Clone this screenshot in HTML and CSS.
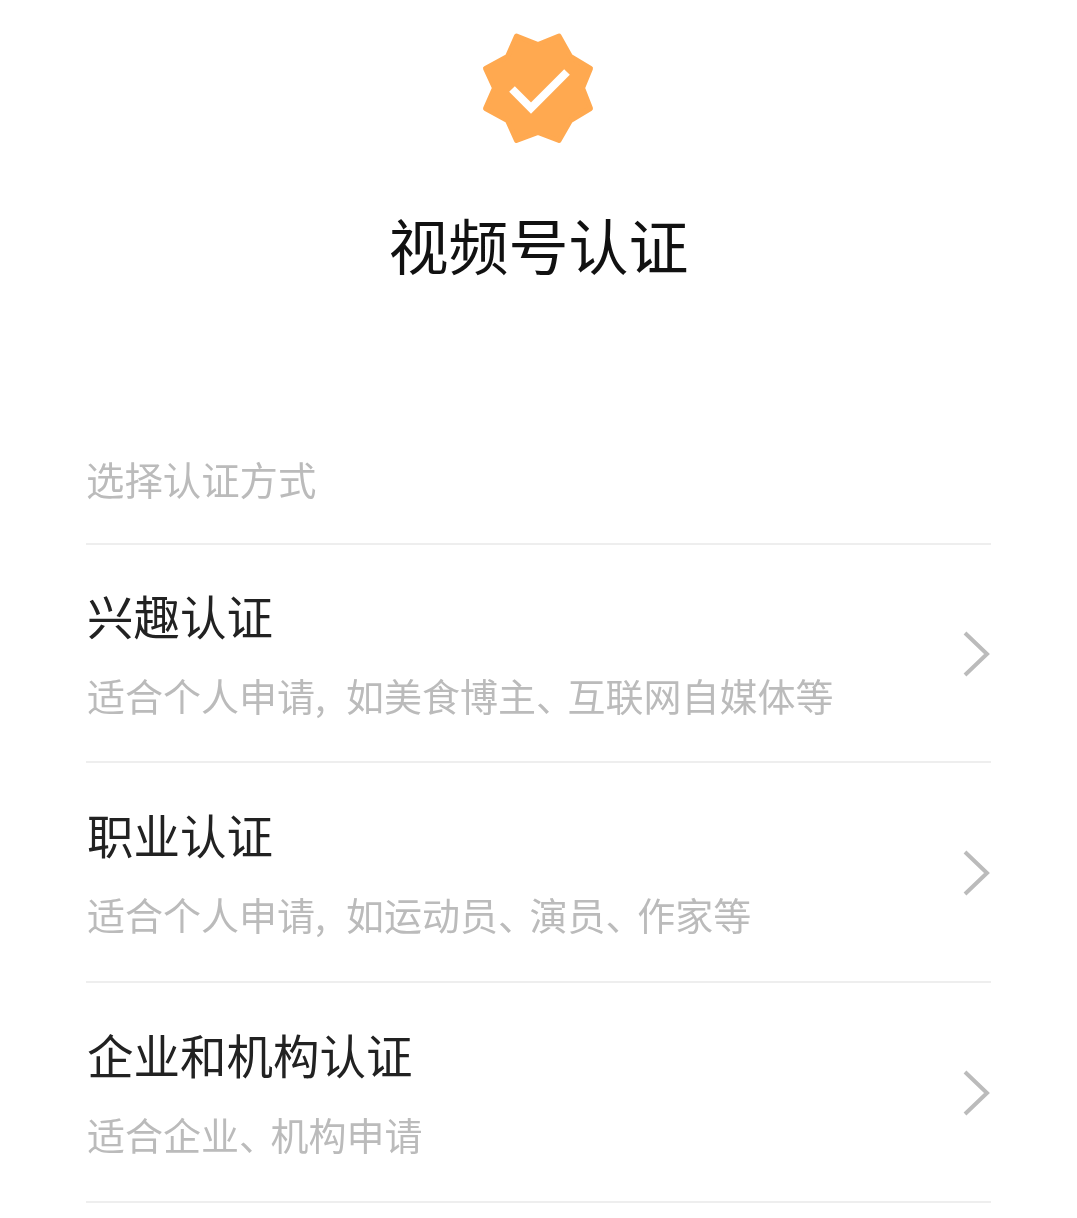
FILE: index.html
```html
<!DOCTYPE html>
<html lang="zh-CN">
<head>
  <meta charset="UTF-8" />
  <title>视频号认证</title>
  <link rel="stylesheet" href="styles.css">
</head>
<body>
  <header class="top">
    <svg class="badge" viewBox="478 28 121 121" width="121" height="121">
      <path class="star" d="M516.5 36 L538 44.5 L559 36 L570.5 56.5 L590.5 68.5 L582.5 88 L590.5 108.5 L570.5 120.5 L559 140.5 L538 132.5 L516.5 140.5 L507.5 120.5 L485.5 108.5 L494.5 88 L485.5 68.5 L507.5 56.5 Z"/>
      <path class="tick" d="M512 89 L531 108 L567 72"/>
    </svg>
    <h1>视频号认证</h1>
  </header>

  <main class="list">
    <p class="list-label">选择认证方式</p>

    <a class="item">
      <div class="item-text">
        <h2>兴趣认证</h2>
        <p>适合个人申请, 如美食博主<span class="dun">、</span>互联网自媒体等</p>
      </div>
      <svg class="arrow" viewBox="0 0 30 50" width="30" height="50"><path d="M5 4 L27 25 L5 46"/></svg>
    </a>

    <a class="item">
      <div class="item-text">
        <h2>职业认证</h2>
        <p>适合个人申请, 如运动员<span class="dun">、</span>演员<span class="dun">、</span>作家等</p>
      </div>
      <svg class="arrow" viewBox="0 0 30 50" width="30" height="50"><path d="M5 4 L27 25 L5 46"/></svg>
    </a>

    <a class="item">
      <div class="item-text">
        <h2>企业和机构认证</h2>
        <p>适合企业<span class="dun">、</span>机构申请</p>
      </div>
      <svg class="arrow" viewBox="0 0 30 50" width="30" height="50"><path d="M5 4 L27 25 L5 46"/></svg>
    </a>
  </main>
</body>
</html>
```

FILE: styles.css
```css
html, body {
  margin: 0;
  padding: 0;
  background-color: #fff;
}

body {
  font-family: "Noto Sans CJK SC", "Noto Sans", sans-serif;
  overflow: hidden;
}

.top {
  display: flex;
  flex-direction: column;
  align-items: center;
  padding-top: 28px;
  will-change: transform;
}

.badge {
  display: block;
}

.star {
  fill: #ffa950;
  stroke: #ffa950;
  stroke-width: 5;
  stroke-linejoin: round;
}

.tick {
  fill: none;
  stroke: #fff;
  stroke-width: 8;
}

.top h1 {
  margin: 53px 0 0;
  font-size: 60px;
  line-height: 84px;
  font-weight: 400;
  color: #111;
}

.list {
  padding: 0 86px;
  will-change: transform;
}

.list-label {
  margin: 0;
  padding-top: 161px;
  height: 96px;
  line-height: 62px;
  font-size: 38.4px;
  color: #bbb;
  border-bottom: 2px solid #eee;
}

.item {
  display: flex;
  align-items: center;
  justify-content: space-between;
  height: 218px;
  border-bottom: 2px solid #eee;
}

.list-label + .item {
  height: 216px;
}

.item-text {
  padding-left: 1px;
  margin-top: -2px;
}

.item h2 {
  margin: 0;
  font-size: 46.5px;
  line-height: 60px;
  font-weight: 400;
  color: #222;
}

.item p {
  margin: 25px 0 0;
  font-size: 38px;
  line-height: 50px;
  color: #bbb;
  word-spacing: 12px;
}

.dun {
  letter-spacing: -6.5px;
}

.arrow {
  display: block;
  margin: 2px 1px 0 0;
}

.arrow path {
  fill: none;
  stroke: #bbb;
  stroke-width: 4;
}
```
